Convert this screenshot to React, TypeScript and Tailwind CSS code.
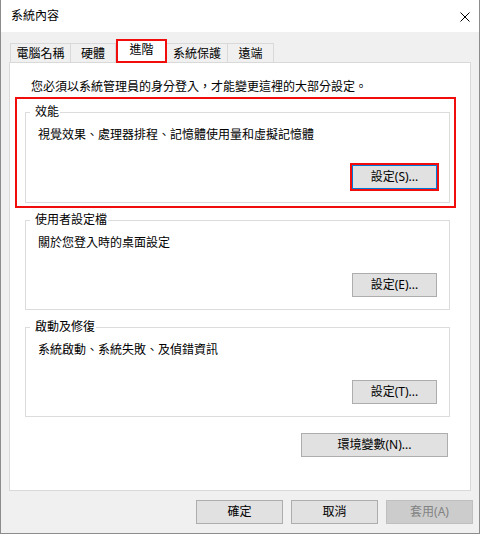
import React from 'react';

const font = "font-['Noto_Sans','Noto_Sans_CJK_TC',sans-serif]";

/** Windows 10 style push button */
const Btn = ({
  label,
  className = '',
  disabled = false,
  focused = false,
}: {
  label: string;
  className?: string;
  disabled?: boolean;
  focused?: boolean;
}) => (
  <div
    className={[
      'flex h-[24px] items-center justify-center border text-[12px] leading-[16px]',
      disabled
        ? 'border-[#bfbfbf] bg-[#cccccc] text-[#838383]'
        : focused
          ? 'border-[#0078d7] bg-[#e1e1e1] text-black ring-2 ring-[#f20d0d]'
          : 'border-[#adadad] bg-[#e1e1e1] text-black',
      className,
    ].join(' ')}
  >
    {label}
  </div>
);

/** Group box with caption sitting on the top border */
const Group = ({
  title,
  text,
  button,
  focused = false,
  className = '',
}: {
  title: string;
  text: string;
  button: string;
  focused?: boolean;
  className?: string;
}) => (
  <div className={`relative flex h-[90px] w-[425px] flex-col border border-[#dcdcdc] pt-[14px] ${className}`}>
    <span className="absolute left-[4px] top-[-9px] bg-white pl-[5px] pr-[1px] text-[12px] leading-[16px]">
      {title}
    </span>
    <p className="pl-[12px] text-[12px] leading-[16px]">{text}</p>
    <Btn label={button} focused={focused} className="mr-[12px] mt-[22px] w-[85px] self-end" />
  </div>
);

export default function App() {
  return (
    <div className={`h-[535px] w-[480px] overflow-hidden bg-white text-black ${font}`}>
      <div className="flex h-[534px] w-[480px] flex-col border-x border-b border-[#8c8c8c]">
        {/* Title bar */}
        <div className="flex h-[32px] items-center justify-between bg-white pl-[10px] pr-[9px]">
          <span className="text-[12px] leading-[16px]">系統內容</span>
          <svg width="10" height="10" viewBox="0 0 10 10" className="mt-[1px]">
            <path d="M0.5 0.5 L9.5 9.5 M9.5 0.5 L0.5 9.5" stroke="#000" strokeWidth="1" fill="none" />
          </svg>
        </div>

        {/* Body */}
        <div className="flex flex-1 flex-col bg-[#f0f0f0] pt-[7px]">
          {/* Tabs */}
          <div className="ml-[9px] flex h-[23px] items-end text-[12px] leading-[16px]">
            <div className="flex h-[19px] w-[61px] items-center justify-center border-x border-t border-[#d9d9d9] pt-[1px]">
              電腦名稱
            </div>
            <div className="flex h-[19px] w-[45px] items-center justify-center border-r border-t border-[#d9d9d9] pt-[1px]">
              硬體
            </div>
            <div className="relative z-10 mb-[-1px] flex h-[24px] w-[51px] items-center justify-center border-2 border-[#f20d0d] bg-white pb-[2px]">
              進階
            </div>
            <div className="flex h-[19px] w-[61px] items-center justify-center border-r border-t border-[#d9d9d9] pt-[1px]">
              系統保護
            </div>
            <div className="flex h-[19px] w-[46px] items-center justify-center border-r border-t border-[#d9d9d9] pt-[1px]">
              遠端
            </div>
          </div>

          {/* Tab panel */}
          <div className="ml-[8px] flex h-[429px] w-[462px] flex-col border border-[#d9d9d9] bg-white pt-[16px]">
            <p className="pl-[21px] text-[12px] leading-[16px]">
              您必須以系統管理員的身分登入，才能變更這裡的大部分設定。
            </p>

            <div className="ml-[5px] mt-[2px] h-[111px] w-[441px] border-2 border-[#f20d0d] pl-[8px] pt-[13px]">
              <Group
                title="效能"
                text="視覺效果、處理器排程、記憶體使用量和虛擬記憶體"
                button="設定(S)..."
                focused
                className="h-[91px]"
              />
            </div>

            <Group
              title="使用者設定檔"
              text="關於您登入時的桌面設定"
              button="設定(E)..."
              className="ml-[15px] mt-[12px]"
            />

            <Group
              title="啟動及修復"
              text="系統啟動、系統失敗、及偵錯資訊"
              button="設定(T)..."
              className="ml-[15px] mt-[17px]"
            />

            <Btn label="環境變數(N)..." className="mr-[22px] mt-[16px] w-[147px] self-end" />
          </div>

          {/* Dialog buttons */}
          <div className="mt-[9px] flex justify-end gap-[8px] pr-[6px]">
            <Btn label="確定" className="w-[87px]" />
            <Btn label="取消" className="w-[87px]" />
            <Btn label="套用(A)" disabled className="w-[87px]" />
          </div>
        </div>
      </div>
    </div>
  );
}
